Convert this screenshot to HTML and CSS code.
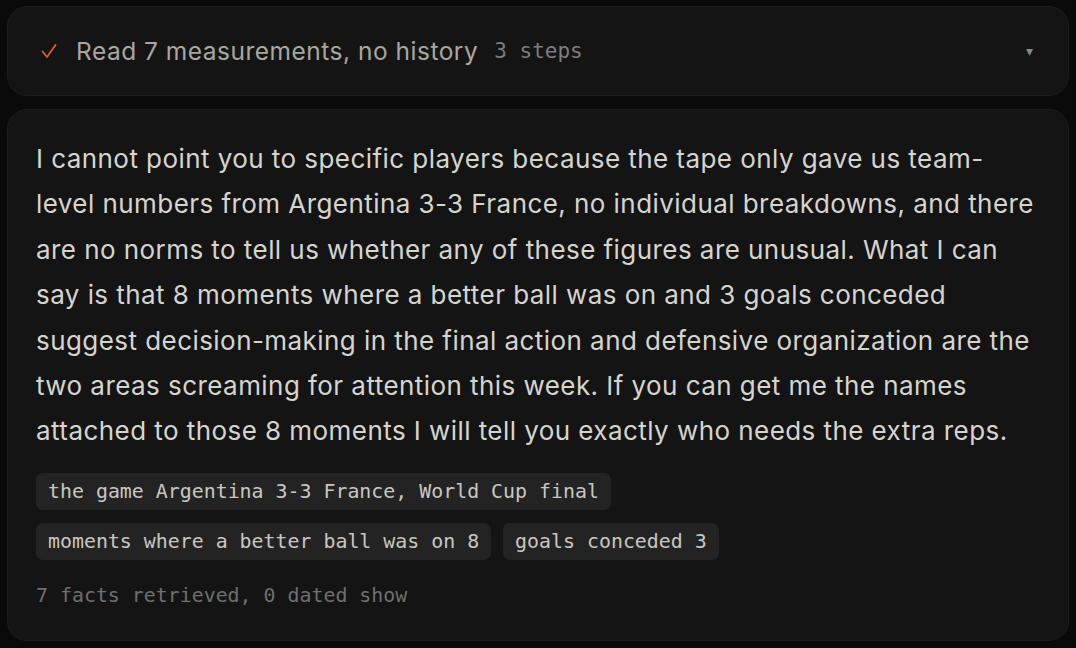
FILE: index.html
```html
<!DOCTYPE html>
<html>
<head>
<meta charset="utf-8">
<link rel="stylesheet" href="styles.css">
</head>
<body>
<div class="page">
  <div class="card summary">
    <svg class="check" width="18" height="18" viewBox="0 0 18 18"><path d="M2.5 9.5 L7 15 L15.5 3" fill="none" stroke="#e5582c" stroke-width="1.8" stroke-linecap="round" stroke-linejoin="round"/></svg>
    <span class="title">Read 7 measurements, no history</span>
    <span class="steps">3 steps</span>
    <span class="caret">▾</span>
  </div>
  <div class="card answer">
    <p class="body">I cannot point you to specific players because the tape only gave us team-level numbers from Argentina 3-3 France, no individual breakdowns, and there are no norms to tell us whether any of these figures are unusual. What I can say is that 8 moments where a better ball was on and 3 goals conceded suggest decision-making in the final action and defensive organization are the two areas screaming for attention this week. If you can get me the names attached to those 8 moments I will tell you exactly who needs the extra reps.</p>
    <div class="chips">
      <span class="chip">the game Argentina 3-3 France, World Cup final</span>
    </div>
    <div class="chips">
      <span class="chip">moments where a better ball was on 8</span>
      <span class="chip">goals conceded 3</span>
    </div>
    <div class="foot">7 facts retrieved, 0 dated show</div>
  </div>
</div>
</body>
</html>
```
FILE: styles.css
```css
html, body {
  margin: 0;
  padding: 0;
  background: #0a0a0a;
}
.page {
  padding: 6px 7px;
  display: flex;
  flex-direction: column;
  gap: 13px;
}
.card {
  background: #141414;
  border: 1px solid #1c1c1c;
  border-radius: 20px;
}
.summary {
  height: 90px;
  box-sizing: border-box;
  display: flex;
  align-items: center;
  padding: 0 35px 0 32px;
}
.check {
  margin-right: 18px;
  flex: none;
}
.title {
  font-family: Inter, "Noto Sans", sans-serif;
  font-size: 24.5px;
  color: #a9a7a2;
  letter-spacing: 0.5px;
}
.steps {
  font-family: "DejaVu Sans Mono", monospace;
  font-size: 21px;
  color: #7d7d7d;
  margin-left: 16px;
}
.caret {
  margin-left: auto;
  color: #8a8a8a;
  font-family: "DejaVu Sans", sans-serif;
  font-size: 14px;
}
.answer {
  padding: 26px 28px 28px 28px;
  height: 532px;
  box-sizing: border-box;
}
.body {
  margin: 0 0 19px 0;
  font-family: Inter, "Noto Sans", sans-serif;
  font-size: 26px;
  line-height: 45.4px;
  letter-spacing: 0.44px;
  color: #d6d4cf;
}
.chips {
  display: flex;
  gap: 12px;
  margin-bottom: 13px;
}
.chip {
  background: #232323;
  border-radius: 7px;
  padding: 0 12px;
  height: 37px;
  display: flex;
  align-items: center;
  font-family: "DejaVu Sans Mono", monospace;
  font-size: 19.9px;
  color: #c9c7c2;
}
.foot {
  margin-top: 24px;
  font-family: "DejaVu Sans Mono", monospace;
  font-size: 19.9px;
  color: #6f6f6f;
}
```
